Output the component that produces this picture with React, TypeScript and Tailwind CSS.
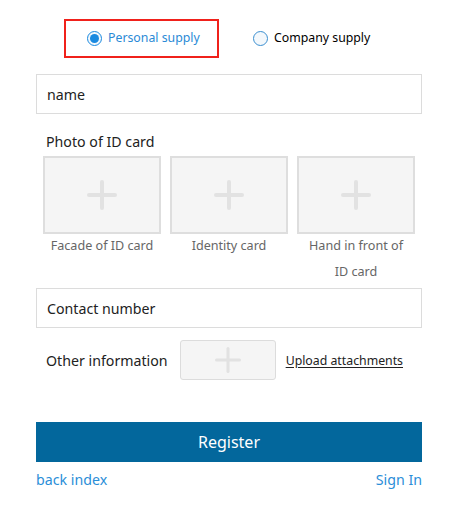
import { useState } from 'react';

const idPhotos = [
  { caption: 'Facade of ID card' },
  { caption: 'Identity card' },
  { caption: 'Hand in front of ID card' },
];

const Plus = ({ size = 30, thick = 4 }: { size?: number; thick?: number }) => (
  <svg width={size} height={size} viewBox={`0 0 ${size} ${size}`}>
    <rect x={0} y={(size - thick) / 2} width={size} height={thick} rx={thick / 2} fill="#e2e2e2" />
    <rect x={(size - thick) / 2} y={0} width={thick} height={size} rx={thick / 2} fill="#e2e2e2" />
  </svg>
);

const Radio = ({ checked }: { checked: boolean }) => (
  <span
    className={`w-[15px] h-[15px] rounded-full border flex items-center justify-center bg-[#f3f8fc] ${
      checked ? 'border-[#1a8ae0]' : 'border-[#3b8fd0]'
    }`}
  >
    {checked && <span className="w-[9px] h-[9px] rounded-full bg-[#1a8ae0]" />}
  </span>
);

export default function App() {
  const [kind, setKind] = useState<'personal' | 'company'>('personal');

  return (
    <div className="w-[465px] h-[517px] bg-white font-['Noto_Sans',sans-serif] text-[#222]">
      <div className="pt-[19px] pl-[64px] flex items-center">
        <button
          onClick={() => setKind('personal')}
          className="w-[155px] h-[39px] border-2 border-[#f0211b] flex items-center pl-[21px] gap-[6px]"
        >
          <Radio checked={kind === 'personal'} />
          <span className="text-[12.3px] leading-[16px] -mt-[2px] text-[#2a8ad6]">Personal supply</span>
        </button>
        <button onClick={() => setKind('company')} className="ml-[34px] flex items-center gap-[6px]">
          <Radio checked={kind === 'company'} />
          <span className="text-[12.3px] leading-[16px] -mt-[2px] text-black">Company supply</span>
        </button>
      </div>

      <div className="ml-[36px] w-[386px] mt-[16px] flex flex-col">
        <div className="h-[40px] border border-[#dcdcdc] flex items-center px-[10px] pt-[1px] text-[14.2px]">name</div>

        <div className="mt-[18px] pl-[10px] text-[14.2px] leading-[20px]">Photo of ID card</div>

        <div className="mt-[4px] pl-[7px] flex gap-[9px]">
          {idPhotos.map((p) => (
            <div key={p.caption} className="w-[118px] flex flex-col items-center">
              <div className="w-[118px] h-[78px] border-2 border-[#dedede] bg-[#f5f5f5] flex items-center justify-center">
                <Plus />
              </div>
              <div className="-mt-[1px] text-[12.6px] leading-[26px] text-[#666] text-center px-[4px]">{p.caption}</div>
            </div>
          ))}
        </div>

        <div className="mt-[3px] h-[40px] border border-[#dcdcdc] flex items-center px-[10px] pt-[1px] text-[14.2px]">
          Contact number
        </div>

        <div className="mt-[12px] pl-[10px] flex items-center">
          <span className="text-[14.2px] pt-[2px]">Other information</span>
          <div className="ml-[12px] w-[96px] h-[40px] rounded-[3px] border border-[#dcdcdc] bg-[#f5f5f5] flex items-center justify-center">
            <Plus size={26} thick={3} />
          </div>
          <a className="ml-[10px] pt-[2px] text-[12.3px] text-[#222] underline underline-offset-2">Upload attachments</a>
        </div>

        <button className="mt-[42px] h-[40px] bg-[#03679c] text-white text-[16px]">Register</button>

        <div className="mt-[7px] flex justify-between text-[14.2px] text-[#2b8ed8]">
          <a>back index</a>
          <a>Sign In</a>
        </div>
      </div>
    </div>
  );
}
